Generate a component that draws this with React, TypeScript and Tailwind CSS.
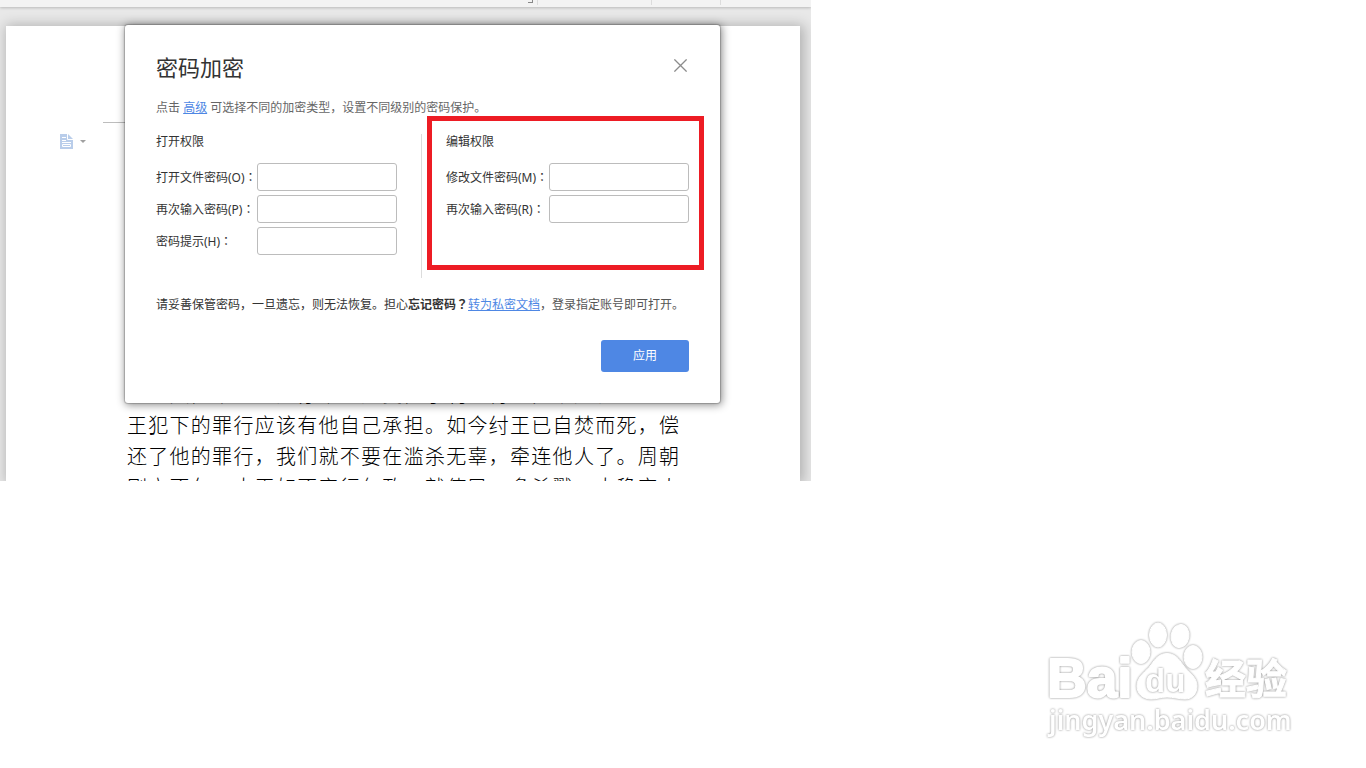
import React from "react";

type FieldProps = { id: string; label: string; type?: string; labelClass: string };

function Field({ id, label, type = "password", labelClass }: FieldProps) {
  return (
    <div className="flex h-7 items-center">
      <label htmlFor={id} className={labelClass}>
        {label}
        <span className="font-['Noto_Sans_CJK_JP',sans-serif]">：</span>
      </label>
      <input id={id} type={type} className="h-7 w-[140px] rounded-[3px] border border-[#bcbcbc] bg-white px-2 outline-none" />
    </div>
  );
}

const openLabel = "w-[101px] shrink-0 whitespace-nowrap";
const editLabel = "w-[103px] shrink-0 whitespace-nowrap";

function PasswordDialog() {
  return (
    <section
      role="dialog"
      aria-labelledby="dialog-title"
      className="absolute left-[125px] top-[25px] w-[595px] rounded-[3px] bg-white px-[31px] pb-[31px] pt-[26px] text-[12px] leading-4 text-[#333] shadow-[0_0_1px_1px_rgba(0,0,0,0.2),1px_1px_8px_1px_rgba(0,0,0,0.45)]"
    >
      <header className="flex items-start justify-between">
        <h1 id="dialog-title" className="text-[22px] leading-8">
          密码加密
        </h1>
        <button type="button" aria-label="关闭" className="mr-0.5 mt-2 text-[#8c8c8c]">
          <svg width="13" height="13" viewBox="0 0 13 13" fill="none" stroke="currentColor" strokeWidth="1.3">
            <path d="M.4.4 12.6 12.6M12.6.4.4 12.6" />
          </svg>
        </button>
      </header>
      <p className="mt-[17px] text-[#666]">
        点击{" "}
        <a href="#advanced" className="text-[#4e87e4] underline">
          高级
        </a>{" "}
        可选择不同的加密类型，设置不同级别的密码保护。
      </p>

      <div className="mt-[18px] flex h-36">
        <div role="group" aria-labelledby="open-title" className="w-[266px] border-r border-[#dcdcdc]">
          <h2 id="open-title" className="mb-[13px]">
            打开权限
          </h2>
          <div className="flex flex-col gap-1">
            <Field id="open-password" label="打开文件密码(O)" labelClass={openLabel} />
            <Field id="open-repeat" label="再次输入密码(P)" labelClass={openLabel} />
            <Field id="hint" label="密码提示(H)" type="text" labelClass={openLabel} />
          </div>
        </div>
        <div role="group" aria-labelledby="edit-title" className="relative pl-6">
          <h2 id="edit-title" className="mb-[13px]">
            编辑权限
          </h2>
          <div className="flex flex-col gap-1">
            <Field id="edit-password" label="修改文件密码(M)" labelClass={editLabel} />
            <Field id="edit-repeat" label="再次输入密码(R)" labelClass={editLabel} />
          </div>
          <div className="pointer-events-none absolute -right-[15px] -top-[18px] h-[154px] w-[277px] border-[5px] border-[#ed1c24]" />
        </div>
      </div>

      <p className="mt-[18px] whitespace-nowrap">
        请妥善保管密码，一旦遗忘，则无法恢复。担心
        <strong>
          忘记密码<span className="font-['Noto_Sans_CJK_JP',sans-serif]">？</span>
        </strong>
        <a href="#private" className="text-[#4e87e4] underline">
          转为私密文档
        </a>
        <span className="text-[#555]">，登录指定账号即可打开。</span>
      </p>
      <div className="mt-[27px] flex justify-end">
        <button type="button" className="h-8 w-[88px] rounded-[3px] bg-[#4e87e4] text-white">
          应用
        </button>
      </div>
    </section>
  );
}

const documentLines = [
  "　　其，中人忠民亦不可免受，小利可得到，就是罚的。内",
  "王犯下的罪行应该有他自己承担。如今纣王已自焚而死，偿",
  "还了他的罪行，我们就不要在滥杀无辜，牵连他人了。周朝",
  "刚立不久，大王如不实行仁政，就使民，多杀戮，大稳定人",
];

function DocumentPage() {
  return (
    <article className="relative ml-[6px] mr-[11px] mt-[19px] h-[455px] bg-white shadow-[2px_1px_12px_2px_rgba(0,0,0,0.24)]">
      <div className="flex justify-start pl-[97px] pt-24">
        <div className="w-6 border-t border-[#bdbdbd]" />
      </div>
      <button type="button" aria-label="粘贴选项" className="ml-[54px] mt-[11px] flex items-center gap-[7px]">
        <svg width="13" height="15" viewBox="0 0 13 15">
          <path d="M0 0h8l5 5v10H0z" fill="#b9cdea" />
          <path d="M7.500 0v5.500H13M2 3.500h4M2 6.500h4M2 8.500h9M2.500 10.500h8v2h-8z" fill="none" stroke="#fff" />
        </svg>
        <svg width="6" height="3" viewBox="0 0 6 3">
          <path d="M0 0h6L3 3z" fill="#a0a0a0" />
        </svg>
      </button>
      <div className="ml-[121px] mt-[230px] w-[552px] text-[20px] font-light leading-[31px] text-black">
        {documentLines.map((line) => (
          <p key={line} className="whitespace-pre text-justify [text-align-last:justify]">
            {line}
          </p>
        ))}
      </div>
    </article>
  );
}

const glow = "drop-shadow-[0_0_1px_#8c8c8c]";

function Watermark() {
  return (
    <svg
      width="260"
      height="130"
      viewBox="0 0 260 130"
      fill="#fff"
      stroke="#fff"
      strokeLinejoin="round"
      role="img"
      aria-label="Baidu 经验"
    >
      <text className={glow} x="7" y="83" fontFamily="Liberation Sans" fontWeight="700" fontSize="55" strokeWidth="2">
        Bai
      </text>
      <g className={glow}>
        <ellipse cx="101" cy="38" rx="9" ry="11.5" />
        <ellipse cx="118" cy="21" rx="8.5" ry="12" />
        <ellipse cx="140" cy="22" rx="9" ry="11.5" transform="rotate(8 140 22)" />
        <ellipse cx="153" cy="43" rx="9" ry="11.5" />
        <path d="M127 39.500C119 39.500 115 45 111 51C106 58 97 62 97 72C97 80 103 85 111 85C117 85 121 83 127 83C133 83 139 85 145 85C153 85 157 79 157 72C157 63 149 59 143 51C139 45 135 39.500 127 39.500Z" />
      </g>
      <text className={glow} x="105" y="78" fontFamily="Liberation Sans" fontWeight="700" fontSize="33" strokeWidth="0">
        du
      </text>
      <text className={glow} x="165" y="80" fontFamily="Noto Sans CJK SC" fontWeight="700" fontSize="41" strokeWidth="1">
        经验
      </text>
      <text className={glow} x="9" y="116" fontFamily="Noto Sans" fontWeight="600" fontSize="27" strokeWidth="0">
        jingyan.baidu.com
      </text>
    </svg>
  );
}

export default function App() {
  return (
    <main className="flex min-h-screen flex-col justify-between bg-white font-['Noto_Sans','Noto_Sans_CJK_SC',sans-serif]">
      <div className="relative h-[481px] w-full max-w-[811px] overflow-hidden bg-[#e8e8e8]">
        <div className="flex h-[7px] justify-end bg-[#f3f3f3] shadow-[0_1px_3px_rgba(0,0,0,0.2)]">
          <div className="mr-1 h-[3px] w-[5px] border-b border-r border-[#888]" />
          <div className="h-[5px] w-[114px] border-l border-[#dcdcdc]" />
          <div className="h-[5px] w-[69px] border-l border-[#dcdcdc]" />
          <div className="h-[5px] w-[91px] border-l border-[#dcdcdc]" />
        </div>
        <DocumentPage />
        <PasswordDialog />
      </div>
      <footer className="flex justify-end pb-6 pr-[66px]">
        <Watermark />
      </footer>
    </main>
  );
}
